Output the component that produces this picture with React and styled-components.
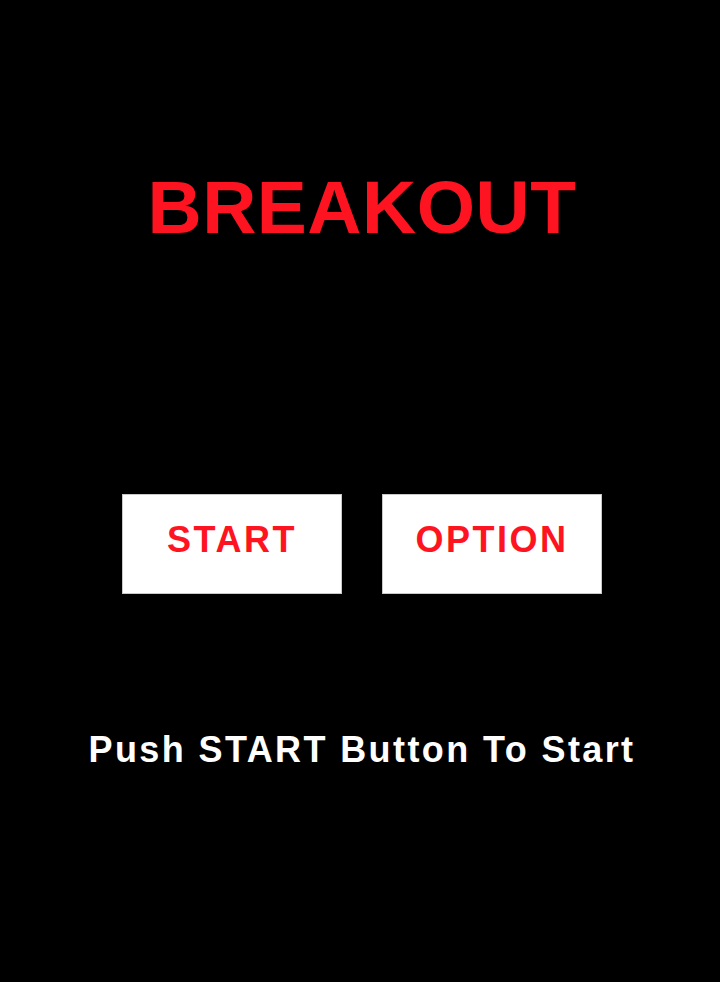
import React from 'react'
import styled, { createGlobalStyle } from 'styled-components'

const GlobalStyle = createGlobalStyle`
    html, body {
        margin: 0;
        padding: 0;
        background: #000;
    }
`

const App = () => (
    <>
        <GlobalStyle />
        <Screen>
            <Title>BREAKOUT</Title>
            <ButtonRow>
                <MenuButton>START</MenuButton>
                <MenuButton>OPTION</MenuButton>
            </ButtonRow>
            <Hint>Push START Button To Start</Hint>
        </Screen>
    </>
)

const Screen = styled.div`
    width: 720px;
    height: 982px;
    background: #000;
    display: flex;
    flex-direction: column;
    align-items: center;
    padding-top: 170px;
    box-sizing: border-box;
    font-family: "Liberation Sans", Arial, sans-serif;
    font-weight: bold;
`

const Title = styled.h1`
    margin: 0 0 0 4px;
    font-size: 75px;
    line-height: 1;
    color: #fe1420;
    font-weight: bold;
    letter-spacing: 0.5px;
`

const ButtonRow = styled.div`
    display: flex;
    gap: 40px;
    margin-top: 249px;
    margin-left: 4px;
`

const MenuButton = styled.div`
    width: 220px;
    height: 100px;
    box-sizing: border-box;
    background: #fff;
    border: 1px solid #c8c8c8;
    display: flex;
    align-items: center;
    justify-content: center;
    padding-bottom: 9px;
    font-size: 36px;
    line-height: 1;
    letter-spacing: 2.5px;
    color: #fe1420;
`

const Hint = styled.p`
    margin: 138px 0 0 4px;
    font-size: 36px;
    line-height: 1;
    letter-spacing: 2.4px;
    color: #fff;
`

export default App
